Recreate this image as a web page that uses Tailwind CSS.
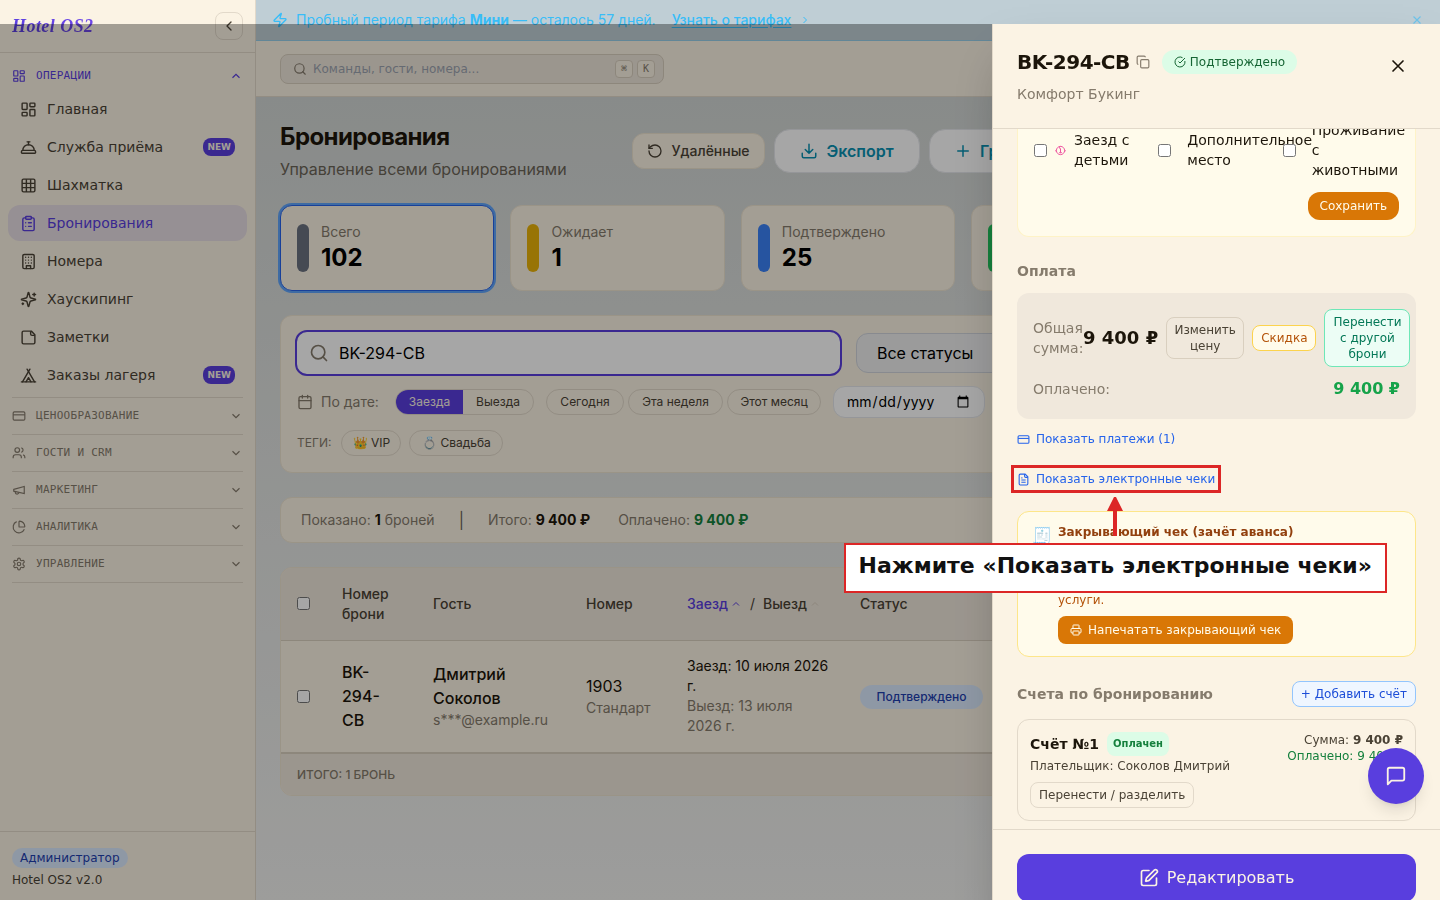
<!DOCTYPE html>
<html lang="ru">
<head>
    <meta charset="UTF-8">
    <meta name="viewport" content="width=device-width, initial-scale=1.0">
    <title>Hotel OS2 — Бронирования</title>
    <script src="https://cdn.jsdelivr.net/npm/@tailwindcss/browser@4"></script>
</head>
<body class="h-screen overflow-hidden bg-[#fbf3e4] font-['DejaVu_Sans',sans-serif] text-[#1c150a]">

    <!-- icon set -->
    <svg class="hidden" aria-hidden="true">
      <symbol id="dashboard" viewBox="0 0 24 24"><rect width="7" height="9" x="3" y="3" rx="1"/><rect width="7" height="5" x="14" y="3" rx="1"/><rect width="7" height="9" x="14" y="12" rx="1"/><rect width="7" height="5" x="3" y="16" rx="1"/></symbol>
      <symbol id="bell" viewBox="0 0 24 24"><path d="M3 20a1 1 0 0 1-1-1v-1a2 2 0 0 1 2-2h16a2 2 0 0 1 2 2v1a1 1 0 0 1-1 1Z"/><path d="M20 16a8 8 0 1 0-16 0"/><path d="M12 4v4"/><path d="M10 4h4"/></symbol>
      <symbol id="grid" viewBox="0 0 24 24"><rect width="18" height="18" x="3" y="3" rx="2"/><path d="M3 9h18M3 15h18M9 3v18M15 3v18"/></symbol>
      <symbol id="clipboard" viewBox="0 0 24 24"><rect width="8" height="4" x="8" y="2" rx="1"/><path d="M16 4h2a2 2 0 0 1 2 2v14a2 2 0 0 1-2 2H6a2 2 0 0 1-2-2V6a2 2 0 0 1 2-2h2"/><path d="M12 11h4M12 16h4M8 11h.01M8 16h.01"/></symbol>
      <symbol id="building" viewBox="0 0 24 24"><rect width="16" height="20" x="4" y="2" rx="2"/><path d="M9 22v-4h6v4"/><path d="M8 6h.01M16 6h.01M12 6h.01M12 10h.01M12 14h.01M16 10h.01M16 14h.01M8 10h.01M8 14h.01"/></symbol>
      <symbol id="sparkles" viewBox="0 0 24 24"><path d="M9.937 15.5A2 2 0 0 0 8.5 14.063l-6.135-1.582a.5.5 0 0 1 0-.962L8.5 9.936A2 2 0 0 0 9.937 8.5l1.582-6.135a.5.5 0 0 1 .963 0L14.063 8.5A2 2 0 0 0 15.5 9.937l6.135 1.581a.5.5 0 0 1 0 .964L15.5 14.063a2 2 0 0 0-1.437 1.437l-1.582 6.135a.5.5 0 0 1-.963 0z"/><path d="M20 3v4M22 5h-4M4 17v2M5 18H3"/></symbol>
      <symbol id="note" viewBox="0 0 24 24"><path d="M16 3H5a2 2 0 0 0-2 2v14a2 2 0 0 0 2 2h14a2 2 0 0 0 2-2V8Z"/><path d="M15 3v4a2 2 0 0 0 2 2h4"/></symbol>
      <symbol id="tent" viewBox="0 0 24 24"><path d="M3.5 21 14 3"/><path d="M20.5 21 10 3"/><path d="M15.5 21 12 15l-3.500 6"/><path d="M2 21h20"/></symbol>
      <symbol id="card" viewBox="0 0 24 24"><rect width="20" height="14" x="2" y="5" rx="2"/><path d="M2 10h20"/></symbol>
      <symbol id="users" viewBox="0 0 24 24"><path d="M16 21v-2a4 4 0 0 0-4-4H6a4 4 0 0 0-4 4v2"/><circle cx="9" cy="7" r="4"/><path d="M22 21v-2a4 4 0 0 0-3-3.870M16 3.130a4 4 0 0 1 0 7.750"/></symbol>
      <symbol id="megaphone" viewBox="0 0 24 24"><path d="m3 11 18-5v12L3 14v-3z"/><path d="M11.600 16.800a3 3 0 1 1-5.800-1.600"/></symbol>
      <symbol id="pie" viewBox="0 0 24 24"><path d="M21 12c.552 0 1.005-.449.950-.998a10 10 0 0 0-8.953-8.951c-.550-.055-.998.398-.998.950v8a1 1 0 0 0 1 1z"/><path d="M21.210 15.890A10 10 0 1 1 8 2.830"/></symbol>
      <symbol id="gear" viewBox="0 0 24 24"><path d="M12.220 2h-.440a2 2 0 0 0-2 2v.180a2 2 0 0 1-1 1.730l-.430.250a2 2 0 0 1-2 0l-.150-.080a2 2 0 0 0-2.730.730l-.220.380a2 2 0 0 0 .730 2.730l.150.100a2 2 0 0 1 1 1.720v.510a2 2 0 0 1-1 1.740l-.150.090a2 2 0 0 0-.730 2.730l.220.380a2 2 0 0 0 2.730.730l.150-.080a2 2 0 0 1 2 0l.430.250a2 2 0 0 1 1 1.730V20a2 2 0 0 0 2 2h.440a2 2 0 0 0 2-2v-.180a2 2 0 0 1 1-1.730l.430-.250a2 2 0 0 1 2 0l.150.080a2 2 0 0 0 2.730-.730l.220-.390a2 2 0 0 0-.730-2.730l-.150-.080a2 2 0 0 1-1-1.740v-.500a2 2 0 0 1 1-1.740l.150-.090a2 2 0 0 0 .730-2.730l-.220-.380a2 2 0 0 0-2.730-.730l-.150.080a2 2 0 0 1-2 0l-.430-.250a2 2 0 0 1-1-1.730V4a2 2 0 0 0-2-2z"/><circle cx="12" cy="12" r="3"/></symbol>
      <symbol id="up" viewBox="0 0 24 24"><path d="m18 15-6-6-6 6"/></symbol>
      <symbol id="down" viewBox="0 0 24 24"><path d="m6 9 6 6 6-6"/></symbol>
      <symbol id="left" viewBox="0 0 24 24"><path d="m15 18-6-6 6-6"/></symbol>
      <symbol id="right" viewBox="0 0 24 24"><path d="m9 18 6-6-6-6"/></symbol>
      <symbol id="zap" viewBox="0 0 24 24"><path d="M4 14a1 1 0 0 1-.780-1.630l9.900-10.200a.5.5 0 0 1 .860.460l-1.920 6.020A1 1 0 0 0 13 10h7a1 1 0 0 1 .780 1.630l-9.900 10.200a.5.5 0 0 1-.860-.460l1.920-6.020A1 1 0 0 0 11 14z"/></symbol>
      <symbol id="search" viewBox="0 0 24 24"><circle cx="11" cy="11" r="8"/><path d="m21 21-4.300-4.300"/></symbol>
      <symbol id="rotate" viewBox="0 0 24 24"><path d="M3 12a9 9 0 1 0 9-9 9.750 9.750 0 0 0-6.740 2.740L3 8"/><path d="M3 3v5h5"/></symbol>
      <symbol id="download" viewBox="0 0 24 24"><path d="M21 15v4a2 2 0 0 1-2 2H5a2 2 0 0 1-2-2v-4"/><path d="m7 10 5 5 5-5M12 15V3"/></symbol>
      <symbol id="plus" viewBox="0 0 24 24"><path d="M5 12h14M12 5v14"/></symbol>
      <symbol id="calendar" viewBox="0 0 24 24"><path d="M8 2v4M16 2v4M3 10h18"/><rect width="18" height="18" x="3" y="4" rx="2"/></symbol>
      <symbol id="x" viewBox="0 0 24 24"><path d="M18 6 6 18M6 6l12 12"/></symbol>
      <symbol id="copy" viewBox="0 0 24 24"><rect width="14" height="14" x="8" y="8" rx="2"/><path d="M4 16c-1.100 0-2-.900-2-2V4c0-1.100.900-2 2-2h10c1.100 0 2 .900 2 2"/></symbol>
      <symbol id="check" viewBox="0 0 24 24"><path d="M21.801 10A10 10 0 1 1 17 3.335"/><path d="m9 11 3 3L22 4"/></symbol>
      <symbol id="baby" viewBox="0 0 24 24"><circle cx="12" cy="12" r="9"/><path d="M12 3c-3 2-3 5 0 5v9M9 12h.01M15 12h.01M9 16c2 1.500 4 1.500 6 0M2 11v3M22 11v3"/></symbol>
      <symbol id="file" viewBox="0 0 24 24"><path d="M15 2H6a2 2 0 0 0-2 2v16a2 2 0 0 0 2 2h12a2 2 0 0 0 2-2V7Z"/><path d="M14 2v4a2 2 0 0 0 2 2h4M10 9H8M16 13H8M16 17H8"/></symbol>
      <symbol id="printer" viewBox="0 0 24 24"><path d="M6 18H4a2 2 0 0 1-2-2v-5a2 2 0 0 1 2-2h16a2 2 0 0 1 2 2v5a2 2 0 0 1-2 2h-2"/><path d="M6 9V3a1 1 0 0 1 1-1h10a1 1 0 0 1 1 1v6"/><rect width="12" height="8" x="6" y="14" rx="1"/></symbol>
      <symbol id="edit" viewBox="0 0 24 24"><path d="M12 3H5a2 2 0 0 0-2 2v14a2 2 0 0 0 2 2h14a2 2 0 0 0 2-2v-7"/><path d="M18.375 2.625a1 1 0 0 1 3 3l-9.013 9.014a2 2 0 0 1-.853.505l-2.873.840a.5.5 0 0 1-.620-.620l.840-2.873a2 2 0 0 1 .506-.852z"/></symbol>
      <symbol id="chat" viewBox="0 0 24 24"><path d="M21 15a2 2 0 0 1-2 2H7l-4 4V5a2 2 0 0 1 2-2h14a2 2 0 0 1 2 2z"/></symbol>
    </svg>

    <div class="flex h-full">

      <!-- sidebar -->
      <aside class="flex w-64 shrink-0 flex-col border-r border-[#e2d9ca] text-[#4a4235]">
        <div class="flex h-[53px] shrink-0 items-center justify-between border-b border-[#e2d9ca] px-3">
          <a href="#" class="bg-linear-to-r from-[#5b3fe0] to-[#7048e8] bg-clip-text pr-1 font-['Liberation_Serif',serif] text-lg font-bold tracking-wide text-transparent italic">Hotel OS2</a>
          <button aria-label="Свернуть меню" class="flex size-7 items-center justify-center rounded-lg border border-[#e2d9ca]">
            <svg class="size-4 fill-none stroke-current stroke-2" stroke-linecap="round" stroke-linejoin="round"><use href="#left"/></svg>
          </button>
        </div>

        <nav class="flex-1" aria-label="Главное меню">
          <button class="mt-2 flex h-[30px] w-full items-center gap-2.5 px-3 font-['DejaVu_Sans_Mono',monospace] text-[11px] tracking-wide text-[#593ede]">
            <svg class="size-3.5 fill-none stroke-current stroke-2"><use href="#dashboard"/></svg>
            ОПЕРАЦИИ
            <svg class="ml-auto size-3.5 fill-none stroke-current stroke-2"><use href="#up"/></svg>
          </button>
          <div class="flex flex-col gap-0.5 px-2 pb-1 text-sm">
            <a href="#" class="flex h-9 items-center gap-2.5 rounded-xl px-3">
              <svg class="size-[17px] fill-none stroke-current stroke-2"><use href="#dashboard"/></svg>Главная</a>
            <a href="#" class="flex h-9 items-center gap-2.5 rounded-xl px-3">
              <svg class="size-[17px] fill-none stroke-current stroke-2" stroke-linecap="round" stroke-linejoin="round"><use href="#bell"/></svg>Служба приёма
              <span class="ml-auto rounded-lg bg-[#593ede] px-1 text-[9px] leading-[18px] font-bold text-[#fbf3e4]">NEW</span></a>
            <a href="#" class="flex h-9 items-center gap-2.5 rounded-xl px-3">
              <svg class="size-[17px] fill-none stroke-current stroke-2"><use href="#grid"/></svg>Шахматка</a>
            <a href="#" class="flex h-9 items-center gap-2.5 rounded-xl bg-[#593ede]/12 px-3 text-[#593ede]">
              <svg class="size-[17px] fill-none stroke-current stroke-2" stroke-linecap="round" stroke-linejoin="round"><use href="#clipboard"/></svg>Бронирования</a>
            <a href="#" class="flex h-9 items-center gap-2.5 rounded-xl px-3">
              <svg class="size-[17px] fill-none stroke-current stroke-2" stroke-linecap="round" stroke-linejoin="round"><use href="#building"/></svg>Номера</a>
            <a href="#" class="flex h-9 items-center gap-2.5 rounded-xl px-3">
              <svg class="size-[17px] fill-none stroke-current stroke-2" stroke-linecap="round" stroke-linejoin="round"><use href="#sparkles"/></svg>Хаускипинг</a>
            <a href="#" class="flex h-9 items-center gap-2.5 rounded-xl px-3">
              <svg class="size-[17px] fill-none stroke-current stroke-2" stroke-linejoin="round"><use href="#note"/></svg>Заметки</a>
            <a href="#" class="flex h-9 items-center gap-2.5 rounded-xl px-3">
              <svg class="size-[17px] fill-none stroke-current stroke-2" stroke-linecap="round" stroke-linejoin="round"><use href="#tent"/></svg>Заказы лагеря
              <span class="ml-auto rounded-lg bg-[#593ede] px-1 text-[9px] leading-[18px] font-bold text-[#fbf3e4]">NEW</span></a>
          </div>
          <div class="mx-3 divide-y divide-[#e2d9ca] border-y border-[#e2d9ca] font-['DejaVu_Sans_Mono',monospace] text-[11px] tracking-wide text-[#857b6c]">
            <button class="flex h-[37px] w-full items-center gap-2.5">
              <svg class="size-3.5 fill-none stroke-current stroke-2"><use href="#card"/></svg>ЦЕНООБРАЗОВАНИЕ
              <svg class="ml-auto size-3.5 fill-none stroke-current stroke-2"><use href="#down"/></svg></button>
            <button class="flex h-[37px] w-full items-center gap-2.5">
              <svg class="size-3.5 fill-none stroke-current stroke-2"><use href="#users"/></svg>ГОСТИ И CRM
              <svg class="ml-auto size-3.5 fill-none stroke-current stroke-2"><use href="#down"/></svg></button>
            <button class="flex h-[37px] w-full items-center gap-2.5">
              <svg class="size-3.5 fill-none stroke-current stroke-2"><use href="#megaphone"/></svg>МАРКЕТИНГ
              <svg class="ml-auto size-3.5 fill-none stroke-current stroke-2"><use href="#down"/></svg></button>
            <button class="flex h-[37px] w-full items-center gap-2.5">
              <svg class="size-3.5 fill-none stroke-current stroke-2"><use href="#pie"/></svg>АНАЛИТИКА
              <svg class="ml-auto size-3.5 fill-none stroke-current stroke-2"><use href="#down"/></svg></button>
            <button class="flex h-9 w-full items-center gap-2.5">
              <svg class="size-3.5 fill-none stroke-current stroke-2"><use href="#gear"/></svg>УПРАВЛЕНИЕ
              <svg class="ml-auto size-3.5 fill-none stroke-current stroke-2"><use href="#down"/></svg></button>
          </div>
        </nav>

        <div class="border-t border-[#e2d9ca] px-3 pt-4 pb-3 text-xs">
          <span class="inline-block rounded-full bg-[#dbeafe] px-2 py-0.5 text-[#1e40af]">Администратор</span>
          <p class="mt-1">Hotel OS2 v2.0</p>
        </div>
      </aside>

      <div class="flex min-w-0 flex-1 flex-col font-['Inter',sans-serif]">
        <!-- trial banner -->
        <div class="flex h-[41px] shrink-0 items-center border-b border-[#97cee8] bg-[#bfced5] px-4 text-sm text-[#38bdf8]">
          <svg class="mr-2 size-4 fill-none stroke-current stroke-2" stroke-linecap="round" stroke-linejoin="round"><use href="#zap"/></svg>
          <span>Пробный период тарифа <b>Мини</b> — осталось 57 дней.</span>
          <a href="#" class="ml-4 flex items-center gap-2 font-medium"><span class="underline underline-offset-2">Узнать о тарифах</span>
            <svg class="size-3 fill-none stroke-current stroke-2"><use href="#right"/></svg></a>
          <button aria-label="Закрыть" class="ml-auto opacity-60"><svg class="size-3.5 fill-none stroke-current stroke-2"><use href="#x"/></svg></button>
        </div>

        <header class="flex h-14 shrink-0 items-center border-b border-[#e2d9ca] px-6">
          <div class="flex h-[30px] w-96 items-center gap-1 rounded-lg border border-[#d9cfbf] bg-[#efe7db] pr-2 pl-3 text-[#857b6c]">
            <svg class="size-3.5 shrink-0 fill-none stroke-current stroke-2" stroke-linecap="round"><use href="#search"/></svg>
            <input type="text" aria-label="Поиск" placeholder="Команды, гости, номера..." class="ml-0.5 min-w-0 flex-1 font-['DejaVu_Sans',sans-serif] text-xs placeholder:text-[#9ca3af]">
            <kbd class="flex h-[18px] w-[18px] items-center justify-center rounded-sm border border-[#d9cfbf] bg-[#fbf3e4] font-['DejaVu_Sans_Mono',monospace] text-[10px]">⌘</kbd>
            <kbd class="flex h-[18px] w-[18px] items-center justify-center rounded-sm border border-[#d9cfbf] bg-[#fbf3e4] font-['DejaVu_Sans_Mono',monospace] text-[10px]">K</kbd>
          </div>
        </header>

        <main class="flex-1 overflow-hidden bg-linear-to-b from-[#d2d6d4] to-[#f1f1ef] p-6">
          <div class="flex items-center justify-between">
            <div>
              <h1 class="text-2xl font-bold tracking-tight">Бронирования</h1>
              <p class="mt-1 text-base text-[#6b6457]">Управление всеми бронированиями</p>
            </div>
            <div class="flex w-[784px] items-center gap-[9px]">
              <button class="flex h-9 w-[133px] items-center justify-center gap-2 rounded-xl border border-[#ede3d0] bg-[#fbf3e4] text-sm font-medium text-[#4a4235]">
                <svg class="size-4 fill-none stroke-current stroke-2" stroke-linecap="round" stroke-linejoin="round"><use href="#rotate"/></svg>Удалённые</button>
              <button class="flex h-11 w-[146px] items-center justify-center gap-2 rounded-2xl border border-gray-200 bg-white text-base font-semibold text-[#0891b2]">
                <svg class="size-[18px] fill-none stroke-current stroke-2" stroke-linecap="round" stroke-linejoin="round"><use href="#download"/></svg>Экспорт</button>
              <button class="flex h-11 items-center gap-2 rounded-2xl border border-gray-200 bg-white px-6 text-base font-semibold whitespace-nowrap text-[#0891b2]">
                <svg class="size-[18px] fill-none stroke-current stroke-2" stroke-linecap="round"><use href="#plus"/></svg>Групповая бронь</button>
              <button class="flex h-11 flex-1 items-center justify-center gap-2 rounded-2xl bg-[#593ede] text-base font-semibold whitespace-nowrap text-white">Новая бронь</button>
            </div>
          </div>

          <div class="mt-6 grid grid-cols-5 gap-4 text-sm">
            <button class="flex h-[86px] items-center gap-3 rounded-xl border border-[#2563eb] bg-[#fbf3e4] px-4 text-left ring-2 ring-[#60a5fa]">
              <span class="h-12 w-3 rounded-full bg-[#6b7280]"></span>
              <span class="text-[#857b6c]">Всего<b class="block text-2xl text-black">102</b></span>
            </button>
            <button class="flex h-[86px] items-center gap-3 rounded-xl border border-[#ede3d0] bg-[#fbf3e4] px-4 text-left">
              <span class="h-12 w-3 rounded-full bg-[#eab308]"></span>
              <span class="text-[#857b6c]">Ожидает<b class="block text-2xl text-black">1</b></span>
            </button>
            <button class="flex h-[86px] items-center gap-3 rounded-xl border border-[#ede3d0] bg-[#fbf3e4] px-4 text-left">
              <span class="h-12 w-3 rounded-full bg-[#3b82f6]"></span>
              <span class="text-[#857b6c]">Подтверждено<b class="block text-2xl text-black">25</b></span>
            </button>
            <button class="flex h-[86px] items-center gap-3 rounded-xl border border-[#ede3d0] bg-[#fbf3e4] px-4 text-left">
              <span class="h-12 w-3 rounded-full bg-[#22c55e]"></span>
              <span class="text-[#857b6c]">Заселено<b class="block text-2xl text-black">12</b></span>
            </button>
            <button class="flex h-[86px] items-center gap-3 rounded-xl border border-[#ede3d0] bg-[#fbf3e4] px-4 text-left">
              <span class="h-12 w-3 rounded-full bg-[#ef4444]"></span>
              <span class="text-[#857b6c]">Отменено<b class="block text-2xl text-black">8</b></span>
            </button>
          </div>

          <!-- filters -->
          <section class="mt-6 rounded-xl border border-[#ede3d0] bg-[#fbf3e4] px-4 pt-3.5 pb-4 text-[#4a4235]">
            <div class="-ml-0.5 flex items-center gap-3.5">
              <label class="flex h-[46px] w-[547px] shrink-0 items-center gap-2.5 rounded-xl border-2 border-[#593ede] bg-white px-3 text-[#857b6c]">
                <svg class="size-5 fill-none stroke-current stroke-2" stroke-linecap="round"><use href="#search"/></svg>
                <input type="text" aria-label="Поиск брони" value="BK-294-CB" class="min-w-0 flex-1 text-base text-black outline-none">
              </label>
              <select aria-label="Статус" class="h-10 w-full appearance-none rounded-xl border border-gray-300 bg-[#eeeeef] px-5 text-base text-black">
                <option>Все статусы</option>
              </select>
            </div>
            <div class="mt-2.5 flex items-center text-xs">
              <svg class="mr-2 size-4 fill-none stroke-[#857b6c] stroke-2" stroke-linecap="round"><use href="#calendar"/></svg>
              <span class="mr-3 w-[62px] text-sm text-[#857b6c]">По дате:</span>
              <div class="mr-3 flex h-[26px] overflow-hidden rounded-full border border-[#e2d9ca]">
                <button class="w-[67px] bg-[#593ede] text-[#fbf3e4]">Заезда</button>
                <button class="w-[70px]">Выезда</button>
              </div>
              <button class="mr-1 h-[26px] w-[78px] rounded-full border border-[#e2d9ca]">Сегодня</button>
              <button class="mr-1 h-[26px] w-[95px] rounded-full border border-[#e2d9ca]">Эта неделя</button>
              <button class="mr-3 h-[26px] w-[94px] rounded-full border border-[#e2d9ca]">Этот месяц</button>
              <input type="date" aria-label="Дата" class="h-8 w-[152px] rounded-xl border border-gray-200 bg-white px-3 text-sm text-black">
            </div>
            <div class="mt-3 flex items-center text-xs">
              <span class="mr-2.5 text-[#857b6c]">ТЕГИ:</span>
              <button class="mr-2 h-[26px] w-[60px] rounded-full border border-[#e2d9ca]">👑 VIP</button>
              <button class="h-[26px] w-[94px] rounded-full border border-[#e2d9ca]">💍 Свадьба</button>
            </div>
          </section>

          <section class="mt-6 flex h-[46px] items-center rounded-xl border border-[#ede3d0] bg-[#fbf3e4] px-5 text-sm text-[#857b6c]">
            <span>Показано: <b class="text-[#1c150a]">1</b> броней</span>
            <span class="mx-6 text-base text-[#6b6457]">|</span>
            <span>Итого: <b class="text-[#1c150a]">9 400 ₽</b></span>
            <span class="ml-7">Оплачено: <b class="text-[#15803d]">9 400 ₽</b></span>
          </section>

          <div class="mt-6 overflow-hidden rounded-xl border border-[#ede3d0] bg-[#fbf3e4]">
            <table class="w-full table-fixed text-left">
              <colgroup><col class="w-[45px]"><col class="w-[91px]"><col class="w-[153px]"><col class="w-[101px]"><col class="w-[173px]"><col></colgroup>
              <thead>
                <tr class="h-[72px] border-b border-[#d9cfbf] bg-[#efe7db] text-sm text-[#4a4235]">
                  <th class="px-4"><input type="checkbox" aria-label="Выбрать все" class="block size-[13px]"></th>
                  <th class="px-4 font-medium">Номер брони</th>
                  <th class="px-4 font-medium">Гость</th>
                  <th class="px-4 font-medium">Номер</th>
                  <th class="px-4 font-medium whitespace-nowrap">
                    <div class="flex items-center">
                      <span class="text-[#593ede]">Заезд</span><svg class="ml-0.5 size-3 fill-none stroke-[#593ede] stroke-2"><use href="#up"/></svg>
                      <span class="mx-2 font-normal">/</span>
                      <span>Выезд</span><svg class="ml-0.5 size-3 fill-none stroke-[#d9cfbf] stroke-2"><use href="#up"/></svg>
                    </div>
                  </th>
                  <th class="px-4 font-medium">Статус</th>
                </tr>
              </thead>
              <tbody>
                <tr class="h-[113px]">
                  <td class="px-4"><input type="checkbox" aria-label="Выбрать BK-294-CB" class="block size-[13px]"></td>
                  <td class="px-4 font-medium">BK-294-CB</td>
                  <td class="px-4"><span class="font-medium">Дмитрий Соколов</span><span class="block text-sm text-[#857b6c]">s***@example.ru</span></td>
                  <td class="px-4">1903<span class="block text-sm text-[#857b6c]">Стандарт</span></td>
                  <td class="px-4 text-sm"><span class="whitespace-nowrap">Заезд: 10 июля 2026</span> г.<span class="block text-[#857b6c]">Выезд: 13 июля 2026 г.</span></td>
                  <td class="px-4"><span class="inline-block w-[123px] rounded-full bg-[#dbeafe] py-1 text-center text-xs font-medium text-[#1e40af]">Подтверждено</span></td>
                </tr>
              </tbody>
              <tfoot>
                <tr class="h-[42px] border-t-2 border-[#d9cfbf] bg-[#efe7db] text-xs font-medium text-[#857b6c]">
                  <td colspan="6" class="px-4">ИТОГО: 1 БРОНЬ</td>
                </tr>
              </tfoot>
            </table>
          </div>
        </main>
      </div>
    </div>

    <!-- backdrop -->
    <div class="fixed inset-x-0 top-6 bottom-0 bg-black/35"></div>

    <!-- booking drawer -->
    <aside class="fixed top-6 right-0 -bottom-[26px] flex w-full max-w-md flex-col border-l border-[#e2d9ca] bg-[#fbf3e4] shadow-2xl">
      <div class="flex h-[105px] shrink-0 items-start justify-between border-b border-[#e2d9ca] px-6 pt-6">
        <div>
          <div class="flex items-center">
            <h2 class="text-xl font-bold tracking-tight">BK-294-CB</h2>
            <button aria-label="Копировать" class="ml-1.5 text-[#857b6c]"><svg class="size-3.5 fill-none stroke-current stroke-2"><use href="#copy"/></svg></button>
            <span class="ml-3 flex h-6 items-center gap-1 rounded-full bg-[#dcfce7] px-3 text-xs text-[#166534]">
              <svg class="size-3 fill-none stroke-current stroke-2"><use href="#check"/></svg>Подтверждено</span>
          </div>
          <p class="mt-2 text-sm text-[#857b6c]">Комфорт Букинг</p>
        </div>
        <button aria-label="Закрыть панель" class="mt-2 mr-2"><svg class="size-5 fill-none stroke-current stroke-2" stroke-linecap="round"><use href="#x"/></svg></button>
      </div>

      <div class="min-h-0 flex-1 overflow-hidden px-6">
        <div class="-mt-[9px] rounded-b-xl border border-t-0 border-[#fef3c7] bg-[#fffbeb] px-4 pb-4 text-sm">
          <div class="grid grid-cols-3 gap-2">
            <label class="flex items-center gap-2"><input type="checkbox" class="size-[13px] shrink-0">
              <svg class="w-[11px] shrink-0 fill-none stroke-[#ec4899] stroke-2" height="11"><use href="#baby"/></svg><span>Заезд с детьми</span></label>
            <label class="flex items-center gap-4"><input type="checkbox" class="size-[13px] shrink-0"><span class="min-w-0">Дополнительное место</span></label>
            <label class="flex items-center gap-4"><input type="checkbox" class="size-[13px] shrink-0"><span class="min-w-0">Проживание с животными</span></label>
          </div>
          <div class="mt-3 flex justify-end">
            <button class="h-7 rounded-xl bg-[#d97706] px-3 text-xs text-[#fffbeb]">Сохранить</button>
          </div>
        </div>

        <h3 class="mt-6 text-sm font-semibold text-[#857b6c]">Оплата</h3>
        <div class="mt-3 rounded-xl bg-[#f0e8dc] p-4 text-sm text-[#857b6c]">
          <div class="flex items-center">
            <span class="w-[50px] shrink-0">Общая сумма:</span>
            <div class="flex items-center gap-2 text-xs">
              <b class="text-lg whitespace-nowrap text-[#1c150a]">9 400 ₽</b>
              <button class="w-[78px] shrink-0 rounded-lg border border-[#d9cfbf] py-1 text-[#4a4235]">Изменить цену</button>
              <button class="shrink-0 rounded-lg border border-[#fcd34d] bg-[#fffbeb] px-2 py-1 text-[#b45309]">Скидка</button>
              <button class="w-[86px] shrink-0 rounded-lg border border-[#6ee7b7] bg-[#ecfdf5] px-2 py-1 text-[#047857]">Перенести с другой брони</button>
            </div>
          </div>
          <div class="mt-2 flex h-7 items-center justify-between">
            <span>Оплачено:</span><b class="text-base leading-7 text-[#16a34a]">9 400 ₽</b>
          </div>
        </div>

        <button class="mt-3 flex items-center gap-1.5 text-xs text-[#2563eb]"><svg class="size-[13px] fill-none stroke-current stroke-2"><use href="#card"/></svg>Показать платежи (1)</button>
        <button class="mt-6 flex items-center gap-1.5 text-xs text-[#2563eb] outline-3 outline-offset-3 outline-[#dc2626]"><svg class="size-[13px] fill-none stroke-current stroke-2"><use href="#file"/></svg>Показать электронные чеки</button>

        <div class="mt-6 flex items-start gap-2 rounded-xl border border-[#fde68a] bg-[#fffbeb] px-3.5 py-3 text-xs text-[#b45309]">
          <span class="w-[18px] shrink-0 text-base">🧾</span>
          <div>
            <h4 class="font-semibold text-[#92400e]">Закрывающий чек (зачёт аванса)</h4>
            <p class="mt-1">По брони получена предоплата. После заселения гостя нужно напечатать закрывающий чек, чтобы зачесть внесённый аванс за<br>услуги.</p>
            <button class="mt-2 flex h-7 items-center gap-1.5 rounded-lg bg-[#d97706] px-3 text-[#fffbeb]"><svg class="size-3 fill-none stroke-current stroke-2"><use href="#printer"/></svg>Напечатать закрывающий чек</button>
          </div>
        </div>

        <div class="mt-6 flex items-center justify-between">
          <h3 class="text-sm font-semibold text-[#857b6c]">Счета по бронированию</h3>
          <button class="rounded-lg border border-[#93c5fd] bg-[#eff6ff] px-2 py-1 text-xs text-[#1d4ed8]">+ Добавить счёт</button>
        </div>
        <div class="mt-3 flex items-start justify-between rounded-xl border border-[#e2d9ca] p-3 text-xs text-[#4a4235]">
          <div>
            <div class="flex items-center gap-2"><b class="text-sm text-[#1c150a]">Счёт №1</b><span class="rounded-lg bg-[#dcfce7] px-1.5 text-[10px] leading-6 font-bold text-[#15803d]">Оплачен</span></div>
            <p class="mt-0.5">Плательщик: Соколов Дмитрий</p>
            <button class="mt-2 rounded-lg border border-[#e2d9ca] px-2 py-1">Перенести / разделить</button>
          </div>
          <div class="text-right">
            <p>Сумма: <b>9 400 ₽</b></p>
            <p class="text-[#15803d]">Оплачено: 9 400 ₽</p>
          </div>
        </div>
      </div>

      <div class="shrink-0 border-t border-[#e2d9ca] p-6">
        <button class="flex h-12 w-full items-center justify-center gap-2 rounded-xl bg-[#593ede] text-base text-[#fbf3e4]">
          <svg class="size-5 fill-none stroke-current stroke-2" stroke-linecap="round" stroke-linejoin="round"><use href="#edit"/></svg>Редактировать</button>
      </div>
    </aside>

    <button aria-label="Чат" class="fixed right-4 bottom-24 flex size-14 items-center justify-center rounded-full bg-[#593ede] text-[#fbf3e4] shadow-lg">
      <svg class="size-[22px] fill-none stroke-current stroke-2" stroke-linejoin="round"><use href="#chat"/></svg>
    </button>

    <!-- hint callout with an arrow up to the link -->
    <div class="fixed top-[543px] right-[53px] border-2 border-[#dc2626] bg-white px-[13px] pt-1.5 pb-2.5 text-[22px] leading-[30px] font-bold text-[#111111]">
      Нажмите «Показать электронные чеки»
      <svg class="absolute right-[262px] bottom-full h-12 w-4 fill-[#dc2626]" viewBox="0 0 16 48"><path d="M7 0h2l7 14h-6v25H6V14H0Z"/></svg>
    </div>
</body>
</html>
